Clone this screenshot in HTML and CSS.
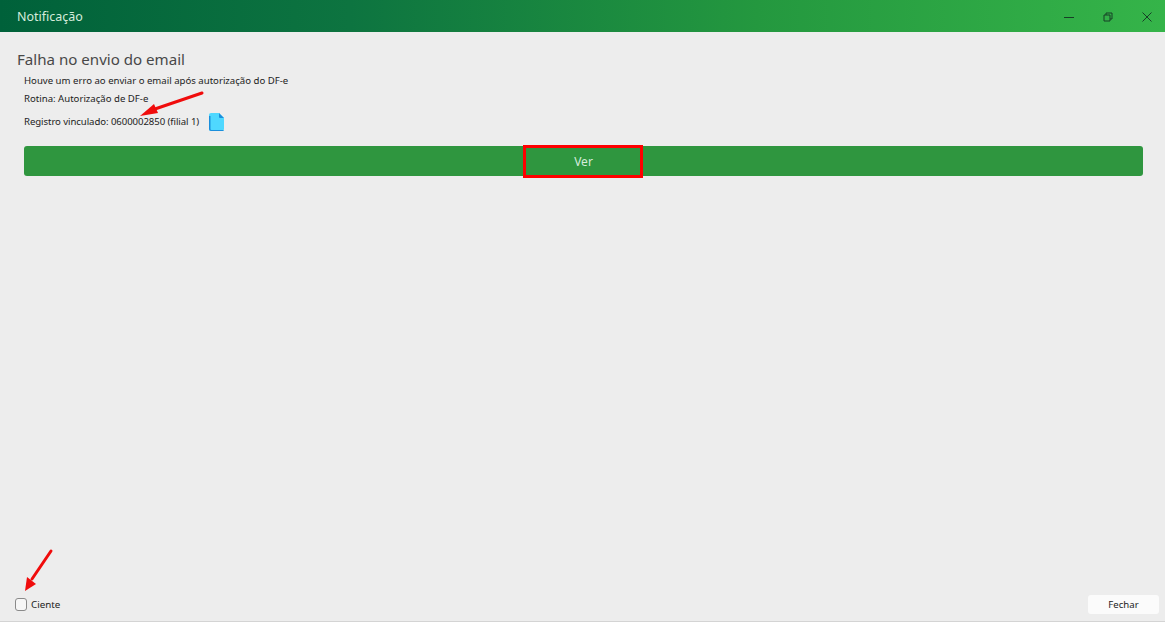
FILE: index.html
```html
<!DOCTYPE html>
<html lang="pt-BR">
<head>
  <meta charset="UTF-8" />
  <meta name="viewport" content="width=device-width, initial-scale=1.0" />
  <title>Notificação</title>
  <link rel="stylesheet" href="styles.css">
</head>
<body>
  <div class="window">
    <header class="titlebar">
      <span class="titlebar-title">Notificação</span>
      <div class="window-controls">
        <svg class="win-icon" viewBox="0 0 10 10"><path d="M0 5.500h10" /></svg>
        <svg class="win-icon" viewBox="0 0 10 10"><path d="M1 3h6v6H1zM3 3V1h6v6H7" /></svg>
        <svg class="win-icon" viewBox="0 0 10 10"><path d="M.5.5l9 9M9.500.5l-9 9" /></svg>
      </div>
    </header>

    <main class="content">
      <h1 class="heading">Falha no envio do email</h1>
      <div class="details">
        <p>Houve um erro ao enviar o email após autorização do DF-e</p>
        <p>Rotina: Autorização de DF-e</p>
        <p class="linked">
          Registro vinculado: 0600002850 (filial 1)
          <svg class="doc-icon" viewBox="0 0 15 18">
            <path fill="#4fd8ff" d="M2 0h8l5 5v11a2 2 0 0 1-2 2H2a2 2 0 0 1-2-2V2a2 2 0 0 1 2-2z" />
            <path fill="#1b8fdc" d="M10 0l5 5h-4a1 1 0 0 1-1-1zM0 3h1.500v13a1 1 0 0 0 1 1H15a2 2 0 0 1-2 1H2a2 2 0 0 1-2-2z" />
          </svg>
        </p>
        <button class="btn-ver">Ver</button>
      </div>
    </main>

    <footer class="footer">
      <label class="ciente"><span class="checkbox"></span>Ciente</label>
      <button class="btn-fechar">Fechar</button>
    </footer>

    <!-- marcacoes em vermelho por cima do print -->
    <svg class="marks" viewBox="0 0 1165 622">
      <path d="M202 93L152 110" stroke="#f00c0c" stroke-width="3" stroke-linecap="round" fill="none" />
      <path d="M140 116L154 104L158 113z" fill="#f00c0c" />
      <path d="M51 551L32 579" stroke="#f00c0c" stroke-width="3" stroke-linecap="round" fill="none" />
      <path d="M25 591L27 577L36 584z" fill="#f00c0c" />
      <rect x="524.500" y="146.500" width="117" height="30" fill="none" stroke="#f00" stroke-width="3" />
    </svg>
  </div>
</body>
</html>
```

FILE: styles.css
```css
* { box-sizing: border-box; }
html, body {
  margin: 0;
  height: 100%;
  overflow: hidden;
}
body {
  font-family: "Noto Sans", "Open Sans", sans-serif;
  background: #ededed;
  color: #222;
}
.window {
  position: relative;
  display: flex;
  flex-direction: column;
  height: 622px;
  border-bottom: 1px solid #d4d4d4;
}
.titlebar {
  display: flex;
  justify-content: space-between;
  align-items: center;
  height: 32px;
  padding: 1px 0 0 17px;
  background: linear-gradient(90deg, #00613a 0%, #0d7440 30%, #24983f 65%, #35b449 100%);
}
.titlebar-title {
  color: #d5ecdc;
  font-size: 12.5px;
}
.window-controls {
  display: flex;
  align-items: center;
  gap: 29px;
  padding-right: 13px;
}
.win-icon {
  width: 10px;
  height: 10px;
  fill: none;
  stroke: #173f26;
  stroke-width: 1;
}
.content {
  flex: 1;
  padding: 17px 22px 0 17px;
}
.heading {
  margin: 0 0 3px;
  font-size: 15.1px;
  font-weight: 400;
  line-height: 20px;
  color: #484848;
}
.details {
  padding-left: 7px;
}
.details p {
  margin: 0;
  font-size: 9.6px;
  line-height: 18px;
}
.details .linked {
  display: flex;
  align-items: center;
  gap: 10px;
  height: 27px;
  line-height: 27px;
  letter-spacing: -0.07px;
}
.doc-icon {
  width: 15px;
  height: 18px;
}
.btn-ver {
  display: block;
  width: 100%;
  height: 30px;
  margin-top: 11px;
  border: none;
  border-radius: 3px;
  background: #2f963f;
  color: #d5ecdc;
  font-family: inherit;
  font-size: 12px;
}
.footer {
  display: flex;
  justify-content: space-between;
  align-items: center;
  padding: 0 6px 7px 15px;
}
.ciente {
  display: flex;
  align-items: center;
  gap: 4px;
  font-size: 9.8px;
}
.checkbox {
  width: 12px;
  height: 13px;
  border: 1px solid #8a8a8a;
  border-radius: 3px;
  background: #f6f6f6;
}
.btn-fechar {
  width: 71px;
  height: 19px;
  border: none;
  border-radius: 3px;
  background: #fbfbfb;
  color: #222;
  font-family: inherit;
  font-size: 9.6px;
}
.marks {
  position: absolute;
  inset: 0;
  width: 1165px;
  height: 622px;
  pointer-events: none;
}
```
